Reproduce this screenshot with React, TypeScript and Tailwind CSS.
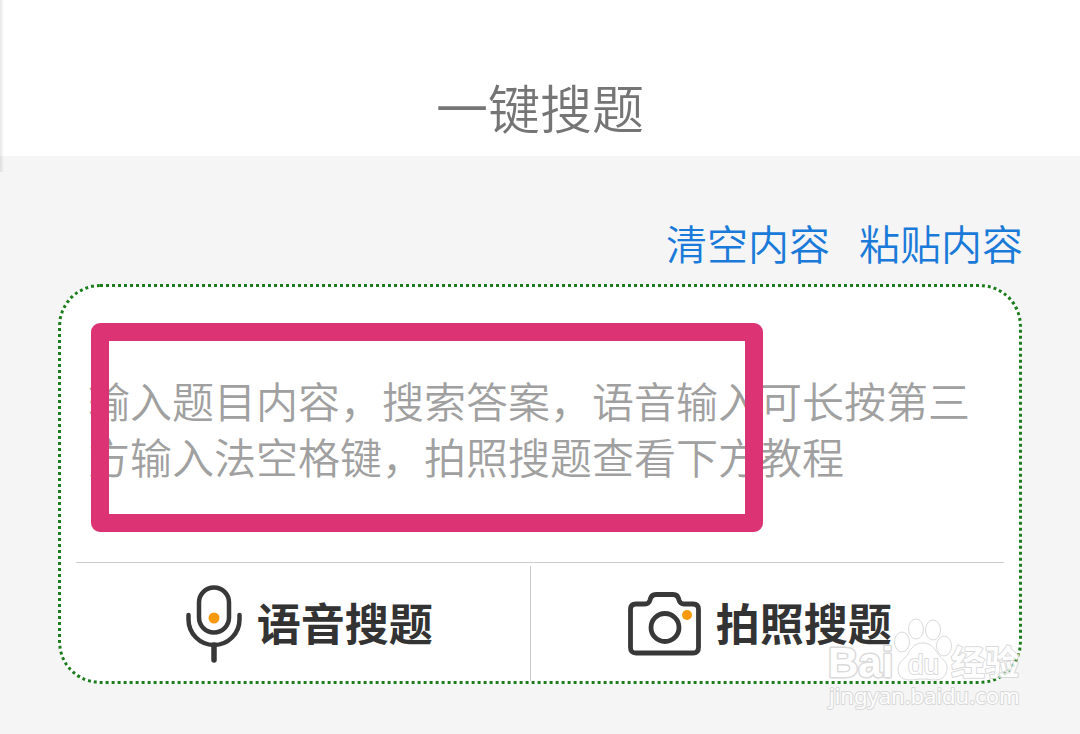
import { useState } from "react"

function MicIcon() {
  return (
    <svg width="56" height="78" viewBox="0 0 56 78" fill="none" stroke="#383838" strokeWidth="4.5" strokeLinecap="round">
      <rect x="13" y="2.5" width="30" height="45" rx="15" />
      <path d="M2.5 30v4.5a25.5 25.5 0 0 0 51 0V30" />
      <path d="M28 60v15" strokeWidth="5.5" />
      <circle cx="28" cy="33" r="5.5" fill="#f89a0c" stroke="none" />
    </svg>
  )
}

function CameraIcon() {
  return (
    <svg width="73" height="64" viewBox="0 0 73 64" fill="none" stroke="#383838" strokeWidth="4.8" strokeLinejoin="round">
      <path d="M8 12h9q4 0 5-4 1.200-5.500 6-5.500h17q5 0 6 5.500 1 4 5 4h9q5.500 0 5.500 5.500v38q0 5.500-5.500 5.500H8q-5.500 0-5.500-5.500v-38Q2.500 12 8 12Z" />
      <circle cx="37" cy="35.500" r="14" />
      <circle cx="59" cy="23" r="5" fill="#f89a0c" stroke="none" />
    </svg>
  )
}

function Watermark() {
  return (
    <svg
      className="pointer-events-none absolute -right-[8px] -bottom-[31px]"
      width="204"
      height="100"
      viewBox="0 0 204 100"
      fill="#ffffff"
      stroke="#d4d4d4"
      strokeWidth="2"
      strokeLinejoin="round"
      opacity="0.85"
      fontFamily='"Liberation Sans", sans-serif'
      aria-hidden="true"
    >
      <g strokeWidth="1" fillOpacity="0.6">
        <ellipse cx="79" cy="30" rx="7.5" ry="10" />
        <ellipse cx="93" cy="17" rx="7.5" ry="10" />
        <ellipse cx="110" cy="18" rx="7.5" ry="10" />
        <ellipse cx="121" cy="34" rx="7.5" ry="10" />
        <path d="M100 31c-8 0-12 5-15 11-4 6-10 8-10 15 0 8 5 11 12 11 5 0 8-1 13-1s7 1 12 1c8 0 12-5 12-12 0-7-5-9-9-14-4-6-7-11-15-11Z" />
      </g>
      <g className="[paint-order:stroke]">
        <text x="5" y="65" fontSize="42" fontWeight="700" strokeWidth="3">Bai</text>
        <text x="85" y="62" fontSize="28">du</text>
        <text x="128" y="63" fontSize="34" fontWeight="700" fontFamily='"Noto Sans CJK SC", sans-serif'>经验</text>
        <text x="6" y="92" fontSize="22" fontFamily='"Noto Sans", sans-serif'>jingyan.baidu.com</text>
      </g>
    </svg>
  )
}

export default function App() {
  const [question, setQuestion] = useState("")

  return (
    <div className="relative min-h-screen bg-[#f5f5f5] font-['Noto_Sans_CJK_SC',sans-serif]">
      <div className="absolute top-0 left-0 h-[172px] w-1 bg-gradient-to-r from-black/10 to-transparent" />

      <header className="flex h-[156px] items-end justify-center bg-white pb-[13px]">
        <h1 className="text-[52px] leading-[72px] font-[350] text-[#757575]">一键搜题</h1>
      </header>

      <main className="px-[57px] pt-[56px]">
        <div className="flex justify-end gap-[29px] pb-3 text-[41px] leading-[60px] font-[350] text-[#1a7ad9]">
          <button type="button" onClick={() => setQuestion("")}>清空内容</button>
          <button type="button">粘贴内容</button>
        </div>

        <section className="relative mx-px rounded-[42px] border-[3px] border-dotted border-[#1c7d1c] bg-white">
          <textarea
            aria-label="题目内容"
            value={question}
            onChange={(e) => setQuestion(e.target.value)}
            placeholder="输入题目内容，搜索答案，语音输入可长按第三方输入法空格键，拍照搜题查看下方教程"
            className="block h-[275px] w-full resize-none px-[27px] pt-[85px] text-[42px] leading-[56px] font-[350] text-[#333333] outline-none placeholder:text-[#a0a0a0] placeholder:opacity-100"
          />

          <div className="mx-[15px] border-t border-[#cccccc]" />

          <div className="flex h-[118px] pt-[3px] text-[44px] leading-[60px] font-bold text-[#333333]">
            <button type="button" className="flex w-[49%] items-center justify-center gap-[15px] pl-[27px]">
              <MicIcon />
              <span className="pb-1">语音搜题</span>
            </button>
            <button type="button" className="flex flex-1 items-center justify-center gap-[15px] border-l border-[#cccccc] pr-[31px]">
              <CameraIcon />
              <span className="pb-1">拍照搜题</span>
            </button>
          </div>

          <div className="pointer-events-none absolute top-[36px] left-[30px] h-[209px] w-[672px] rounded-[9px] border-[18px] border-[#db3373]" />
          <Watermark />
        </section>
      </main>
    </div>
  )
}
